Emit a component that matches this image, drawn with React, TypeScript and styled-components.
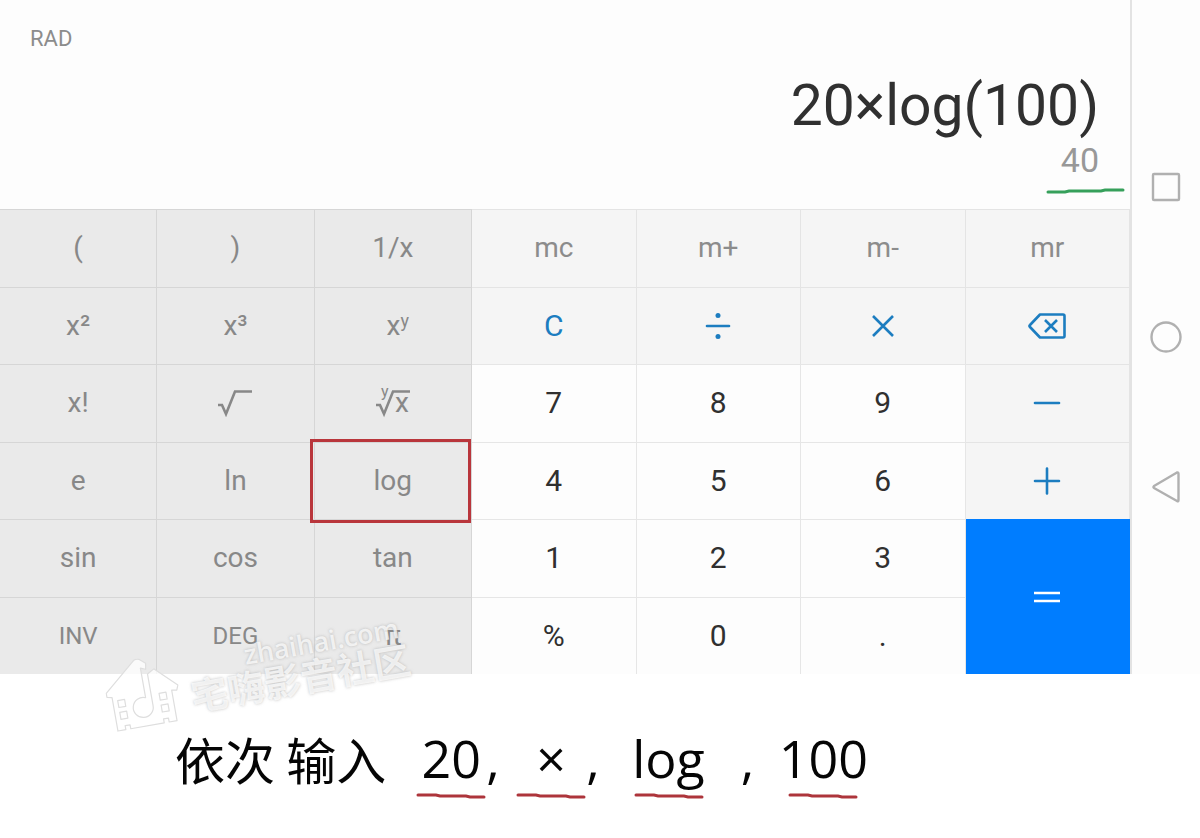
import React from "react";
import styled, { createGlobalStyle } from "styled-components";

const GlobalStyle = createGlobalStyle`
  * { box-sizing: border-box; }
  body { margin: 0; background: #fff; font-family: Roboto, "Liberation Sans", sans-serif; }
  button { font: inherit; }
`;

const Page = styled.main`
  position: relative;
  width: 100%;
  overflow: hidden;
`;

const Phone = styled.section`
  display: flex;
  background: #fdfdfd;
`;

const Calculator = styled.div`
  flex: 1;
  min-width: 0;
`;

const Display = styled.header`
  display: flex;
  justify-content: space-between;
  height: 209px;
  padding: 8px 31px 0 30px;
`;

const Mode = styled.span`
  flex: 1;
  padding-top: 18px;
  font-size: 22px;
  line-height: 26px;
  color: #8c8c8c;
`;

const Readout = styled.div`
  display: flex;
  flex-direction: column;
  align-items: flex-end;
  padding-top: 64px;
`;

const Expression = styled.output`
  font-size: 57px;
  line-height: 68px;
  color: #303030;
`;

const Result = styled.output`
  font-size: 34px;
  line-height: 40px;
  color: #989898;
`;

const ResultMark = styled.svg`
  display: block;
  flex: none;
  margin-right: -26px;
`;

const Keypad = styled.div`
  display: flex;
  height: 465px;
`;

const SciencePad = styled.div`
  display: grid;
  flex: 472;
  grid-template-columns: repeat(3, 1fr);
  grid-template-rows: repeat(6, 1fr);
`;

const NumberPad = styled.div`
  display: grid;
  flex: 658;
  grid-template-columns: repeat(4, 1fr);
  grid-template-rows: repeat(6, 1fr);
`;

type Tone = "science" | "memory" | "operator" | "digit" | "equals";

const tones: Record<Tone, { bg: string; fg: string; line: string; size: number }> = {
  science: { bg: "#eaeaea", fg: "#888888", line: "#d6d6d6", size: 28 },
  memory: { bg: "#f5f5f5", fg: "#8c8c8c", line: "#e4e4e4", size: 28 },
  operator: { bg: "#f5f5f5", fg: "#1c7dc0", line: "#e4e4e4", size: 30 },
  digit: { bg: "#fdfdfd", fg: "#303030", line: "#e6e6e6", size: 30 },
  equals: { bg: "#007dff", fg: "#ffffff", line: "#007dff", size: 30 },
};

const Key = styled.button<{ $tone: Tone; $small?: boolean; $marked?: boolean }>`
  position: relative;
  display: flex;
  align-items: center;
  justify-content: center;
  min-width: 0;
  padding: 0;
  border: 0 solid ${(p) => tones[p.$tone].line};
  border-width: 1px 1px 0 0;
  background: ${(p) => tones[p.$tone].bg};
  color: ${(p) => tones[p.$tone].fg};
  font-size: ${(p) => (p.$small ? 24 : tones[p.$tone].size)}px;
  line-height: 32px;
  cursor: pointer;
  ${(p) => p.$tone === "equals" && "grid-row: span 2;"}
  ${(p) =>
    p.$marked &&
    `&::after {
      content: "";
      position: absolute;
      inset: -4px 0 -4px -5px;
      border: 3px solid #b9363c;
      z-index: 1;
    }`}
`;

const Power = styled.sup`
  align-self: flex-start;
  font-size: 18px;
  line-height: 22px;
`;

const PowerLabel = styled.span`
  display: flex;
  padding-left: 10px;
`;

const Navigation = styled.nav`
  display: flex;
  flex-direction: column;
  align-items: center;
  justify-content: center;
  gap: 118px;
  width: 70px;
  border-left: 2px solid #e3e3e3;
`;

const NavButton = styled.button`
  display: flex;
  padding: 0;
  border: 0;
  background: none;
  cursor: pointer;
`;

const Caption = styled.p`
  display: flex;
  align-items: flex-start;
  margin: 0;
  padding: 52px 0 36px 175px;
  color: #050505;
  font-family: "Open Sans", "Noto Sans CJK SC", sans-serif;
  font-size: 52px;
  line-height: 64px;
  white-space: nowrap;
`;

const Phrase = styled.span`
  margin-right: 30px;
  font-family: "Noto Sans CJK SC", sans-serif;
  font-size: 50px;
`;

const Step = styled.span`
  display: flex;
  flex-direction: column;
  align-items: center;
  gap: 2px;
`;

const Comma = styled.span<{ $before?: number; $after?: number }>`
  width: 14px;
  margin: 0 ${(p) => p.$after ?? 0}px 0 ${(p) => p.$before ?? 0}px;
`;

const Watermark = styled.div`
  position: absolute;
  left: 104px;
  top: 638px;
  display: flex;
  align-items: center;
  gap: 10px;
  color: rgba(255, 255, 255, 0.75);
  font-family: "Open Sans", "Noto Sans CJK SC", sans-serif;
  font-weight: 700;
  text-shadow: 0 0 3px rgba(150, 150, 150, 0.6);
  transform: rotate(-10deg);
  pointer-events: none;
`;

const WatermarkText = styled.div`
  display: flex;
  flex-direction: column;
  align-items: flex-end;
`;

const Site = styled.span`
  margin-right: 6px;
  font-size: 27px;
  font-weight: 600;
  line-height: 26px;
`;

const SiteName = styled.span`
  font-size: 37px;
  line-height: 40px;
`;

const Glyph = ({ w, h, children, width = 2.6 }: { w: number; h: number; children: React.ReactNode; width?: number }) => (
  <svg width={w} height={h} viewBox={`0 0 ${w} ${h}`} fill="none" stroke="currentColor" strokeWidth={width} aria-hidden="true">
    {children}
  </svg>
);

const Underline = () => (
  <svg width="70" height="8" viewBox="0 0 70 8" fill="none" stroke="#ad353b" strokeWidth="3" strokeLinecap="round" aria-hidden="true">
    <path d="M2 3 L20 3 L24 4 L50 4 L54 5 L68 5" />
  </svg>
);

type KeySpec = { name: string; label?: React.ReactNode; tone: Tone; small?: boolean; marked?: boolean };

const sci = (name: string, extra: Partial<KeySpec> = {}): KeySpec => ({ name, tone: "science", ...extra });
const mem = (name: string): KeySpec => ({ name, tone: "memory" });
const num = (name: string): KeySpec => ({ name, tone: "digit" });
const op = (name: string, label?: React.ReactNode): KeySpec => ({ name, label, tone: "operator" });

const scienceKeys: KeySpec[] = [
  sci("("), sci(")"), sci("1/x"),
  sci("x²"), sci("x³"),
  sci("x to the y", { label: <PowerLabel>x<Power>y</Power></PowerLabel> }),
  sci("x!"),
  sci("Square root", {
    label: (
      <Glyph w={36} h={28}>
        <path d="M1 16 H5 L9 25 L18 2.500 H35" />
      </Glyph>
    ),
  }),
  sci("y-th root of x", {
    label: (
      <Glyph w={40} h={48}>
        <path d="M3 26 H7 L11 35 L20 12.500 H37" />
        <g fill="currentColor" stroke="none" fontFamily="Roboto">
          <text x="8" y="18" fontSize="16">y</text>
          <text x="22" y="33" fontSize="28">x</text>
        </g>
      </Glyph>
    ),
  }),
  sci("e"), sci("ln"), sci("log", { marked: true }),
  sci("sin"), sci("cos"), sci("tan"),
  sci("INV", { small: true }), sci("DEG", { small: true }), sci("π"),
];

const numberKeys: KeySpec[] = [
  mem("mc"), mem("m+"), mem("m-"), mem("mr"),
  op("C"),
  op("Divide", (
    <Glyph w={26} h={28}>
      <path d="M2 14 H24" strokeLinecap="round" />
      <circle cx="13" cy="3.500" r="2.500" fill="currentColor" stroke="none" />
      <circle cx="13" cy="24.500" r="2.500" fill="currentColor" stroke="none" />
    </Glyph>
  )),
  op("Multiply", <Glyph w={24} h={24}><path d="M2 2 L22 22 M22 2 L2 22" /></Glyph>),
  op("Backspace", (
    <Glyph w={38} h={28}>
      <path d="M12 2.500 H35 Q36.500 2.500 36.500 4 V24 Q36.500 25.500 35 25.500 H12 L2 15 Q1 14 2 13 Z" strokeLinejoin="round" />
      <path d="M17 8 L29 20 M29 8 L17 20" />
    </Glyph>
  )),
  num("7"), num("8"), num("9"),
  op("Subtract", <Glyph w={28} h={28}><path d="M2 14 H26" strokeLinecap="round" /></Glyph>),
  num("4"), num("5"), num("6"),
  op("Add", <Glyph w={28} h={28}><path d="M2 14 H26 M14 1.500 V26.500" strokeLinecap="round" /></Glyph>),
  num("1"), num("2"), num("3"),
  { name: "Equals", tone: "equals", label: <Glyph w={28} h={16}><path d="M1 4 H27 M1 12 H27" /></Glyph> },
  num("%"), num("0"), num("."),
];

const renderKey = (k: KeySpec) => (
  <Key key={k.name} type="button" $tone={k.tone} $small={k.small} $marked={k.marked} aria-label={k.label ? k.name : undefined}>
    {k.label ?? k.name}
  </Key>
);

export default function App() {
  return (
    <Page>
      <GlobalStyle />
      <Phone>
        <Calculator>
          <Display>
            <Mode>RAD</Mode>
            <Readout>
              <Expression>20×log(100)</Expression>
              <Result>40</Result>
              <ResultMark width="80" height="16" viewBox="0 0 80 16" fill="none" stroke="#36a05b" strokeWidth="3" strokeLinecap="round" aria-hidden="true">
                <path d="M3 12 L20 12 L24 11 L56 11 L60 10 L78 10" />
              </ResultMark>
            </Readout>
          </Display>
          <Keypad>
            <SciencePad>{scienceKeys.map(renderKey)}</SciencePad>
            <NumberPad>{numberKeys.map(renderKey)}</NumberPad>
          </Keypad>
        </Calculator>
        <Navigation aria-label="System">
          <NavButton type="button" aria-label="Recent apps">
            <svg width="32" height="32" fill="none" stroke="#b0b0b0" strokeWidth="2.400" aria-hidden="true">
              <rect x="3" y="3" width="26" height="26" rx="1" />
            </svg>
          </NavButton>
          <NavButton type="button" aria-label="Home">
            <svg width="32" height="32" fill="none" stroke="#b0b0b0" strokeWidth="2.400" aria-hidden="true">
              <circle cx="16" cy="16" r="14.500" />
            </svg>
          </NavButton>
          <NavButton type="button" aria-label="Back">
            <svg width="32" height="32" fill="none" stroke="#b0b0b0" strokeWidth="2.400" strokeLinejoin="round" aria-hidden="true">
              <path d="M27 1.500 Q28.500 1 28.500 3 V29 Q28.500 31 27 30 L4 17 Q3 16 4 15 Z" />
            </svg>
          </NavButton>
        </Navigation>
      </Phone>
      <Caption>
        <Phrase>依次 输入</Phrase>
        <Step>20<Underline /></Step>
        <Comma $after={16}>,</Comma>
        <Step>×<Underline /></Step>
        <Comma $after={32}>,</Comma>
        <Step>log<Underline /></Step>
        <Comma $before={36} $after={24}>,</Comma>
        <Step>100<Underline /></Step>
      </Caption>
      <Watermark>
        <svg width="74" height="70" viewBox="0 0 74 70" fill="rgba(255,255,255,0.75)" stroke="#dedede" strokeWidth="1.200" strokeLinejoin="round" aria-hidden="true">
          <path fillRule="evenodd" d="M39 1 L45 6 L44 12 L39 10 V40 A10 10 0 1 0 45 49 V17 L52 13 L73 33 L71 38 L66 37 V68 H58 V64 H53 V68 H19 V64 H14 V68 H6 V34 L1 33 L1 29 L34 1 Q36 0 39 1 Z M11 38 h7 v7 h-7 Z M11 50 h7 v7 h-7 Z M53 38 h7 v7 h-7 Z M53 50 h7 v7 h-7 Z" />
        </svg>
        <WatermarkText>
          <Site>zhaihai.com</Site>
          <SiteName>宅嗨影音社区</SiteName>
        </WatermarkText>
      </Watermark>
    </Page>
  );
}
